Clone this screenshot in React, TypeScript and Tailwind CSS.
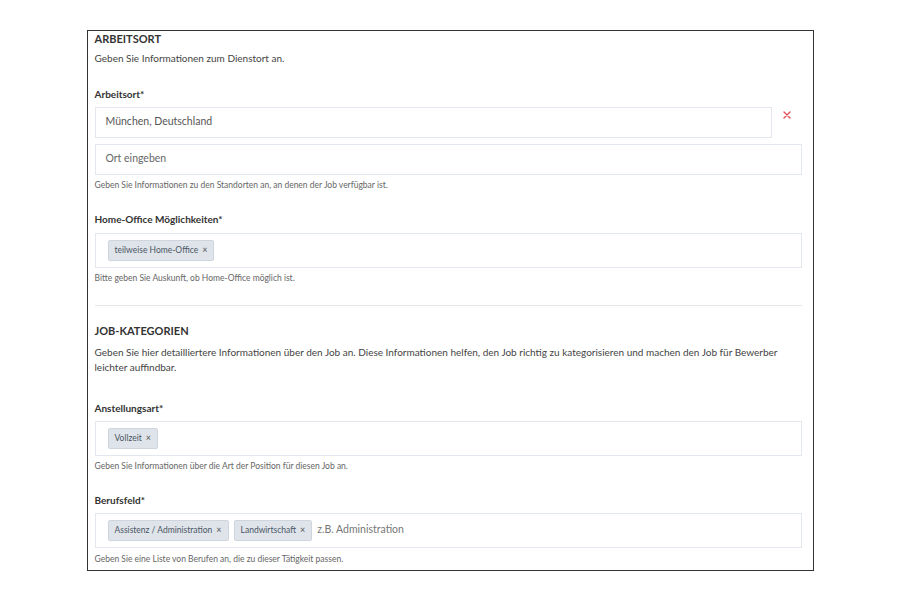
import React from "react";

const font = { fontFamily: "Lato, 'Open Sans', sans-serif" };

function Tag({ label }: { label: string }) {
  return (
    <span className="flex h-[21px] items-center gap-[4px] rounded-[2px] border border-[#cfd5de] bg-[#dfe4eb] px-[6px] text-[8.5px] text-[#4b5563]">
      <span>{label}</span>
      <span className="text-[9px] text-[#555]">×</span>
    </span>
  );
}

function Label({ children, mt }: { children: React.ReactNode; mt: string }) {
  return (
    <div className={`${mt} h-[14px] text-[10px] font-bold leading-[14px] text-[#333]`}>{children}</div>
  );
}

function Help({ children, mt }: { children: React.ReactNode; mt: string }) {
  return <div className={`${mt} h-[12px] text-[8.5px] leading-[12px] text-[#666]`}>{children}</div>;
}

export default function App() {
  return (
    <div className="flex h-[600px] w-[900px] items-center justify-center bg-white" style={font}>
      <div className="flex h-[541px] w-[727px] flex-col overflow-hidden border-[1.5px] border-[#333] pl-[7px] pr-[10px] pt-[1px]">
        <div className="h-[14px] text-[11px] font-bold leading-[14px] text-[#333]">ARBEITSORT</div>
        <div className="mt-[5px] h-[14px] text-[10px] leading-[14px] text-[#444]">
          Geben Sie Informationen zum Dienstort an.
        </div>
        <Label mt="mt-[22px]">Arbeitsort*</Label>
        <div className="mt-[6px] flex items-start">
          <div className="flex h-[31px] w-[677px] items-center border border-[#e3e7ee] pl-[10px] text-[10.5px] text-[#555]">
            München, Deutschland
          </div>
          <div className="flex h-[17px] flex-1 items-center justify-center pb-[1px]">
            <svg width="8" height="8" viewBox="0 0 8 8">
              <path d="M1 1 L7 7 M7 1 L1 7" stroke="#e0505b" strokeWidth="1.4" strokeLinecap="round" />
            </svg>
          </div>
        </div>
        <div className="mt-[6px] flex h-[31px] w-[707px] items-center border border-[#e3e7ee] pl-[10px] text-[10.5px] text-[#666]">
          Ort eingeben
        </div>
        <Help mt="mt-[4px]">Geben Sie Informationen zu den Standorten an, an denen der Job verfügbar ist.</Help>
        <Label mt="mt-[21px]">Home-Office Möglichkeiten*</Label>
        <div className="mt-[7px] flex h-[35px] w-[707px] items-center border border-[#e3e7ee] pl-[12px]">
          <Tag label="teilweise Home-Office" />
        </div>
        <Help mt="mt-[4px]">Bitte geben Sie Auskunft, ob Home-Office möglich ist.</Help>
        <div className="mt-[21px] h-[1px] w-[707px] bg-[#e5e7eb]" />
        <div className="mt-[18px] h-[14px] text-[11px] font-bold leading-[14px] text-[#333]">JOB-KATEGORIEN</div>
        <div className="mt-[7px] w-[707px] text-[10px] leading-[15px] text-[#444]">
          Geben Sie hier detailliertere Informationen über den Job an. Diese Informationen helfen, den Job richtig zu
          kategorisieren und machen den Job für Bewerber leichter auffindbar.
        </div>
        <Label mt="mt-[26px]">Anstellungsart*</Label>
        <div className="mt-[6px] flex h-[35px] w-[707px] items-center border border-[#e3e7ee] pl-[12px]">
          <Tag label="Vollzeit" />
        </div>
        <Help mt="mt-[4px]">Geben Sie Informationen über die Art der Position für diesen Job an.</Help>
        <Label mt="mt-[21px]">Berufsfeld*</Label>
        <div className="mt-[6px] flex h-[35px] w-[707px] items-center gap-[5px] border border-[#e3e7ee] pl-[12px]">
          <Tag label="Assistenz / Administration" />
          <Tag label="Landwirtschaft" />
          <span className="text-[10.5px] text-[#777]">z.B. Administration</span>
        </div>
        <Help mt="mt-[5px]">Geben Sie eine Liste von Berufen an, die zu dieser Tätigkeit passen.</Help>
      </div>
    </div>
  );
}
